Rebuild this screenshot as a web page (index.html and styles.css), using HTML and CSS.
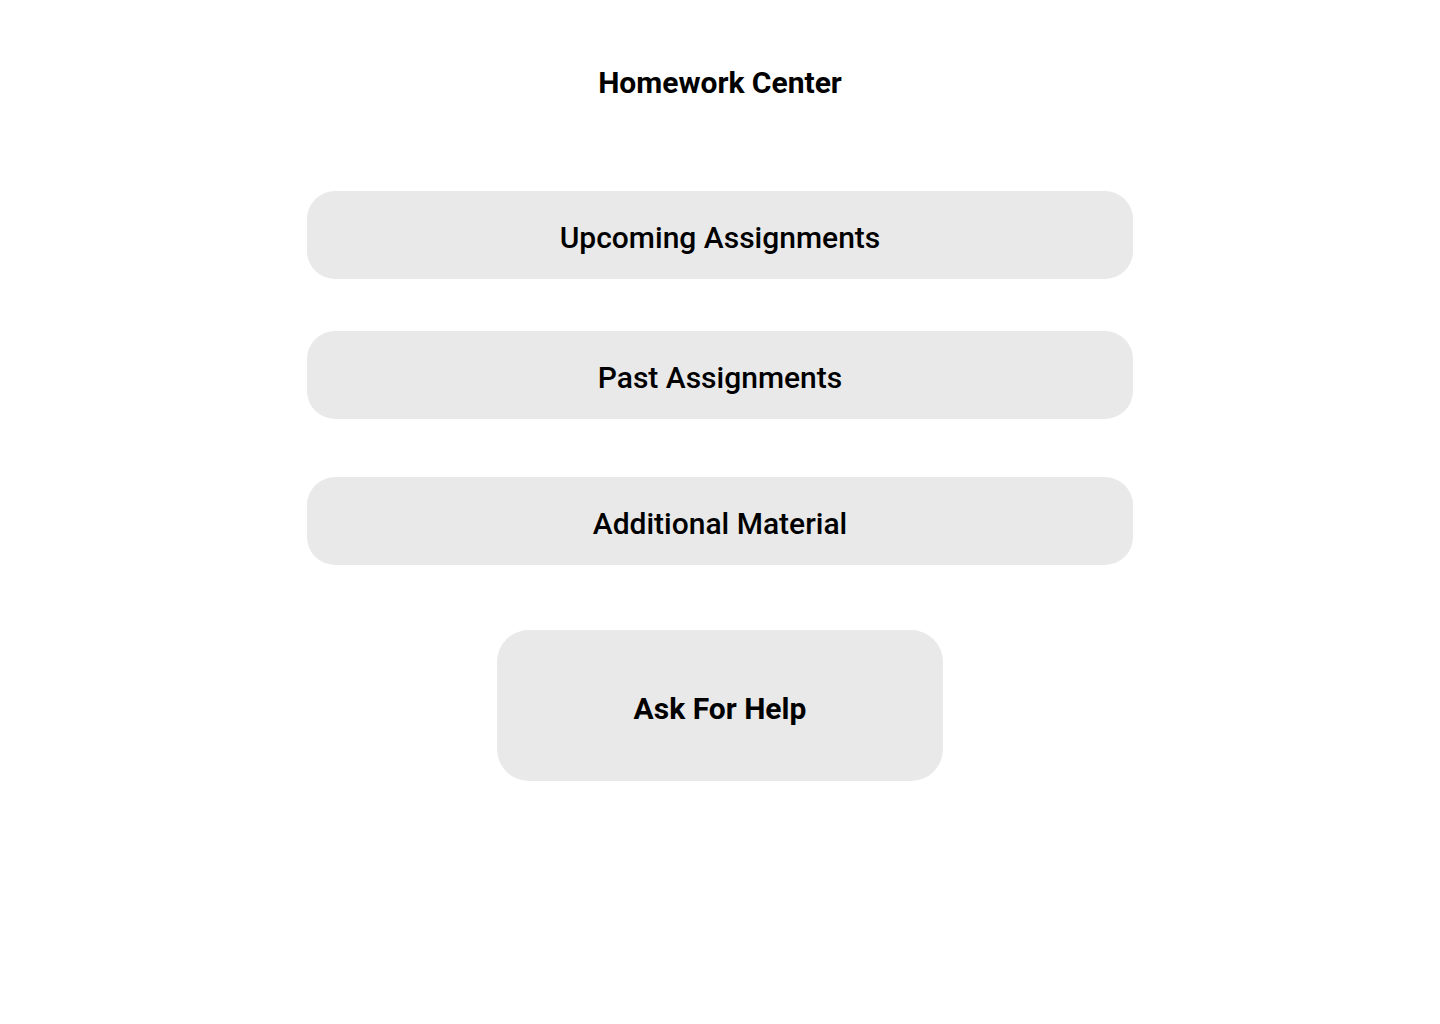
FILE: index.html
```html
<!DOCTYPE html>
<html lang="en">
<head>
<meta charset="utf-8">
<title>Homework Center</title>
<link rel="stylesheet" href="styles.css">
</head>
<body>
<main class="page">
  <h1 class="title">Homework Center</h1>
  <nav class="menu">
    <a class="btn btn-wide btn-1" href="#">Upcoming Assignments</a>
    <a class="btn btn-wide btn-2" href="#">Past Assignments</a>
    <a class="btn btn-wide btn-3" href="#">Additional Material</a>
    <a class="btn btn-help" href="#">Ask For Help</a>
  </nav>
</main>
</body>
</html>
```

FILE: styles.css
```css
* { box-sizing: border-box; }
html, body { margin: 0; padding: 0; background: #ffffff; }
body {
  font-family: Roboto, "Liberation Sans", Arial, sans-serif;
  color: #000;
  width: 1440px;
  height: 1024px;
}
.page {
  display: flex;
  flex-direction: column;
  align-items: center;
}
.title {
  margin: 64px 0 0;
  height: 38px;
  line-height: 38px;
  font-size: 30px;
  font-weight: 700;
  text-align: center;
}
.menu {
  display: flex;
  flex-direction: column;
  align-items: center;
  margin-top: 89px;
}
.btn {
  display: flex;
  align-items: center;
  justify-content: center;
  background: #e9e9e9;
  color: #000;
  text-decoration: none;
  font-size: 30px;
}
.btn-wide {
  width: 826px;
  height: 88px;
  border-radius: 28px;
  font-weight: 500;
  padding-top: 4px;
}
.btn-2 { margin-top: 52px; }
.btn-3 { margin-top: 58px; }
.btn-help {
  margin-top: 65px;
  width: 446px;
  height: 151px;
  border-radius: 32px;
  font-weight: 700;
  padding-top: 6px;
}
```
